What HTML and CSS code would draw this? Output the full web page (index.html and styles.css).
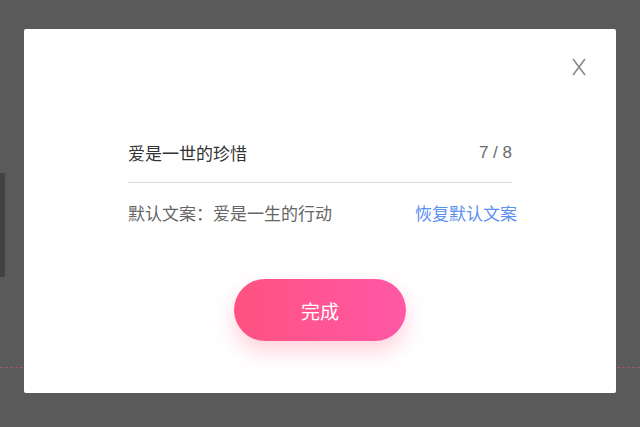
FILE: index.html
```html
<!DOCTYPE html>
<html lang="zh-CN">
<head>
    <meta charset="UTF-8">
    <meta name="viewport" content="width=device-width, initial-scale=1.0">
    <title>编辑文案</title>
    <link rel="stylesheet" href="styles.css">
</head>
<body>

    <!-- page behind the overlay -->
    <div class="backdrop-strip"></div>
    <div class="backdrop-dash"></div>

    <div class="overlay">
        <div class="modal">
            <button class="close-btn" aria-label="关闭">
                <svg width="14" height="18" viewBox="0 0 14 18">
                    <path d="M1 1 L13 17 M13 1 L1 17" stroke="#8a8a8a" stroke-width="1.6" fill="none"/>
                </svg>
            </button>

            <div class="input-row">
                <span class="input-text">爱是一世的珍惜</span>
                <span class="counter">7 / 8</span>
            </div>

            <div class="default-row">
                <span class="default-text">默认文案：爱是一生的行动</span>
                <a class="restore-link" href="#">恢复默认文案</a>
            </div>

            <button class="done-btn">完成</button>
        </div>
    </div>

</body>
</html>
```

FILE: styles.css
```css
/* General body styling */
body {
    margin: 0;
    height: 427px;
    background-color: #5a5a5a;
    font-family: "Noto Sans CJK SC", "Liberation Sans", sans-serif;
    overflow: hidden;
}

.backdrop-strip {
    position: absolute;
    left: 0;
    top: 173px;
    width: 5px;
    height: 104px;
    background-color: #41433e;
}

.backdrop-dash {
    position: absolute;
    left: 0;
    right: 0;
    top: 367px;
    border-top: 1px dashed #9a5a64;
}

.overlay {
    position: relative;
    display: flex;
    justify-content: center;
    padding-top: 29px;
}

.modal {
    position: relative;
    width: 592px;
    height: 364px;
    box-sizing: border-box;
    padding: 113px 104px 0;
    background: white;
    border-radius: 2px;
    display: flex;
    flex-direction: column;
}

.close-btn {
    position: absolute;
    top: 29px;
    right: 30px;
    padding: 0;
    border: none;
    background: none;
    cursor: pointer;
    line-height: 0;
}

.input-row {
    display: flex;
    justify-content: space-between;
    align-items: center;
    line-height: 22px;
    padding-bottom: 18px;
    border-bottom: 1px solid #dcdcdc;
}

.input-text {
    font-size: 17px;
    color: #333;
}

.counter {
    font-family: "Liberation Sans", sans-serif;
    font-size: 17px;
    color: #6a6a6a;
}

.default-row {
    display: flex;
    justify-content: space-between;
    align-items: center;
    line-height: 22px;
    margin-top: 19px;
    margin-right: -5px;
    font-size: 17px;
}

.default-text {
    color: #666;
}

.restore-link {
    color: #5b8ff0;
    text-decoration: none;
}

.done-btn {
    align-self: center;
    margin-top: 55px;
    width: 172px;
    height: 62px;
    border: none;
    border-radius: 31px;
    background: linear-gradient(90deg, #ff5280, #ff58a6);
    box-shadow: 0 10px 22px rgba(255, 90, 130, 0.28);
    color: white;
    font-family: "Noto Sans CJK SC", sans-serif;
    font-size: 19px;
    cursor: pointer;
}
```
